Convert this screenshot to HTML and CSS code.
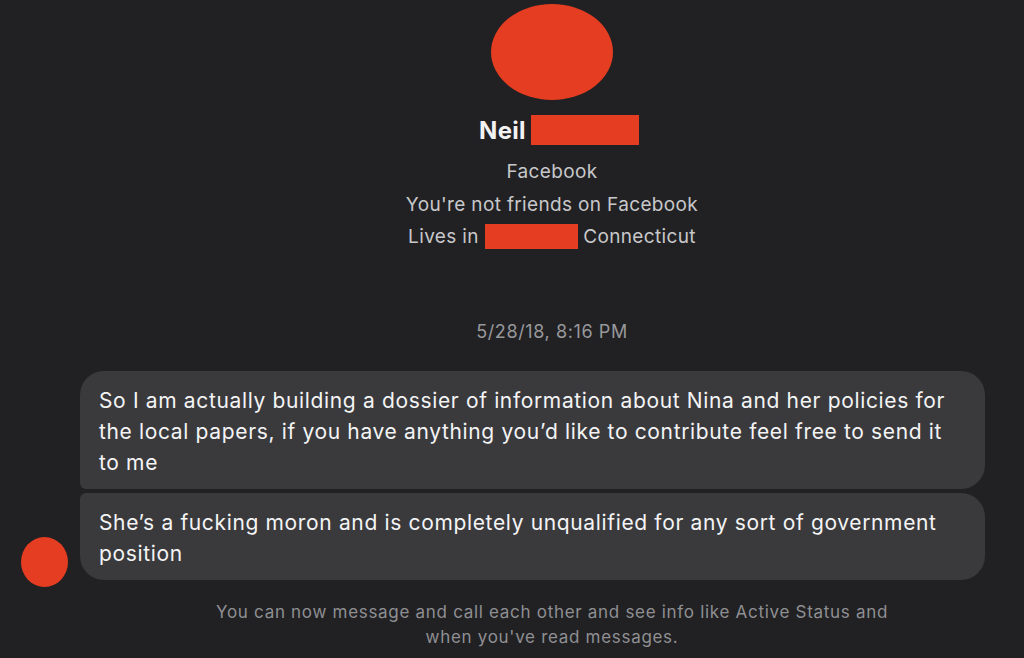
FILE: index.html
```html
<!DOCTYPE html>
<html>
<head>
<meta charset="utf-8">
<link rel="stylesheet" href="styles.css">
</head>
<body>
<div class="page">
  <header class="profile">
    <div class="avatar-big"></div>
    <div class="name-row"><span class="name">Neil</span><span class="redact redact-name"></span></div>
    <div class="info first-info">Facebook</div>
    <div class="info">You're not friends on Facebook</div>
    <div class="info">Lives in <span class="redact redact-city"></span> Connecticut</div>
  </header>
  <div class="date">5/28/18, 8:16 PM</div>
  <div class="thread">
    <div class="side"><div class="avatar-small"></div></div>
    <div class="bubbles">
      <div class="bubble first">So I am actually building a dossier of information about Nina and her policies for the local papers, if you have anything you’d like to contribute feel free to send it to me</div>
      <div class="bubble last">She’s a fucking moron and is completely unqualified for any sort of government position</div>
    </div>
  </div>
  <footer class="notice">You can now message and call each other and see info like Active Status and<br>when you've read messages.</footer>
</div>
</body>
</html>
```
FILE: styles.css
```css
html, body {
  margin: 0;
  padding: 0;
  background: #212124;
  width: 1024px;
  height: 658px;
  overflow: hidden;
}
.page {
  font-family: Inter, "Liberation Sans", sans-serif;
  color: #c9c9cb;
}
.profile {
  margin-left: 80px;
  display: flex;
  flex-direction: column;
  align-items: center;
  padding-top: 4px;
}
.avatar-big {
  width: 122px;
  height: 96px;
  border-radius: 50%;
  background: #e43d21;
}
.name-row {
  display: flex;
  align-items: center;
  gap: 5px;
  margin-top: 15px;
  padding-left: 14px;
  height: 30px;
}
.name {
  font-size: 24px;
  font-weight: 700;
  color: #f2f2f2;
  letter-spacing: 0.3px;
}
.redact {
  display: inline-block;
  background: #e43d21;
}
.redact-name {
  width: 108px;
  height: 30px;
}
.redact-city {
  width: 93px;
  height: 25px;
  vertical-align: -6px;
}
.info {
  font-size: 19px;
  line-height: 32.5px;
  letter-spacing: 0.35px;
  color: #c8c8ca;
}
.first-info { margin-top: 11px; }
.date {
  margin-left: 80px;
  text-align: center;
  font-size: 18px;
  letter-spacing: 0.6px;
  color: #98989b;
  margin-top: 66px;
  line-height: 24px;
}
.thread {
  display: flex;
  align-items: flex-end;
  margin-top: 27px;
}
.side {
  width: 80px;
  display: flex;
  justify-content: flex-start;
  padding-left: 21px;
  box-sizing: border-box;
  margin-bottom: -7px;
}
.avatar-small {
  width: 47px;
  height: 50px;
  border-radius: 50%;
  background: #e43d21;
}
.bubbles {
  width: 905px;
  display: flex;
  flex-direction: column;
  gap: 4px;
}
.bubble {
  background: #3a3a3d;
  color: #f4f4f5;
  font-size: 21px;
  letter-spacing: 0.65px;
  line-height: 31px;
  padding: 14px 30px 11px 19px;
  border-radius: 24px;
}
.bubble.first { border-bottom-left-radius: 6px; }
.bubble.last { border-top-left-radius: 6px; }
.notice {
  margin-left: 80px;
  margin-top: 20px;
  text-align: center;
  font-size: 17px;
  letter-spacing: 0.7px;
  line-height: 25px;
  color: #8f8f92;
}
```
